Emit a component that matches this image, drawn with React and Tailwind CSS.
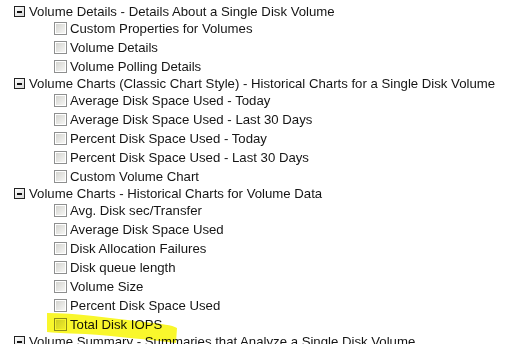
import React from 'react';

const sections = [
  {
    title: 'Volume Details - Details About a Single Disk Volume',
    items: ['Custom Properties for Volumes', 'Volume Details', 'Volume Polling Details'],
  },
  {
    title: 'Volume Charts (Classic Chart Style) - Historical Charts for a Single Disk Volume',
    items: [
      'Average Disk Space Used - Today',
      'Average Disk Space Used - Last 30 Days',
      'Percent Disk Space Used - Today',
      'Percent Disk Space Used - Last 30 Days',
      'Custom Volume Chart',
    ],
  },
  {
    title: 'Volume Charts - Historical Charts for Volume Data',
    items: [
      'Avg. Disk sec/Transfer',
      'Average Disk Space Used',
      'Disk Allocation Failures',
      'Disk queue length',
      'Volume Size',
      'Percent Disk Space Used',
      'Total Disk IOPS',
    ],
  },
  {
    title: 'Volume Summary - Summaries that Analyze a Single Disk Volume',
    items: [],
  },
];

function MinusBox() {
  return (
    <span className="flex h-[11px] w-[11px] shrink-0 items-center justify-center border border-[#222] bg-gradient-to-br from-white to-[#d8d8d8]">
      <span className="h-[2px] w-[5px] bg-[#111]" />
    </span>
  );
}

function CheckBox() {
  return (
    <span className="flex h-[13px] w-[13px] shrink-0 border border-[#8e8f8f] bg-white p-[1px]">
      <span className="h-full w-full bg-gradient-to-br from-[#d4d4d0] to-[#f6f6f4]" />
    </span>
  );
}

export default function App() {
  return (
    <div className="relative h-[344px] w-[511px] overflow-hidden bg-white pt-[4px] font-['Liberation_Sans',Arial,sans-serif] text-[13.2px] leading-none text-[#151515]">
      <div>
        {sections.map((s) => (
          <div key={s.title}>
            <div className="flex h-[15px] items-center pl-[14px]">
              <MinusBox />
              <span className="ml-[4px] whitespace-nowrap">{s.title}</span>
            </div>
            {s.items.map((it) => (
              <div key={it} className="flex h-[19px] items-center pl-[54px]">
                <CheckBox />
                <span className="ml-[3px] whitespace-nowrap">{it}</span>
              </div>
            ))}
          </div>
        ))}
      </div>
      {/* highlighter stroke over the last item */}
      <svg className="pointer-events-none absolute left-0 top-0 mix-blend-multiply" width="511" height="344" viewBox="0 0 511 344">
        <path
          d="M47 313 C 75 313, 110 318, 145 322 C 162 324, 172 325, 177 328 L 176 343 C 150 340, 115 336, 85 334 C 65 333, 52 333, 47 332 Z"
          fill="#f9f72c"
        />
      </svg>
    </div>
  );
}
